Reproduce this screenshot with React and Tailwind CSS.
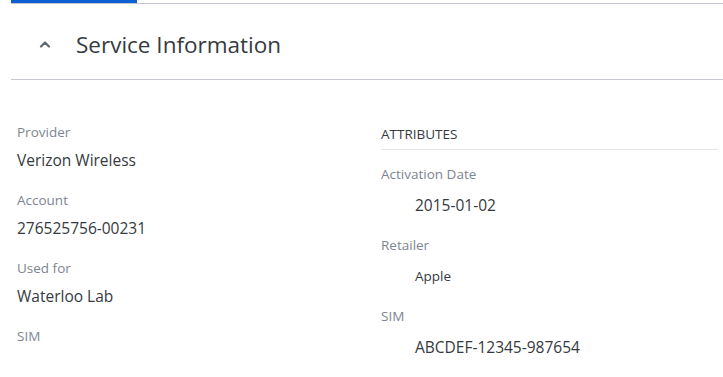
const leftFields = [
  { label: 'Provider', value: 'Verizon Wireless' },
  { label: 'Account', value: '276525756-00231' },
  { label: 'Used for', value: 'Waterloo Lab' },
  { label: 'SIM', value: '' },
]

const attributes = [
  { label: 'Activation Date', value: '2015-01-02', size: 'text-[15.5px]' },
  { label: 'Retailer', value: 'Apple', size: 'text-[13.5px]' },
  { label: 'SIM', value: 'ABCDEF-12345-987654', size: 'text-[15.5px]' },
]

function ChevronUp() {
  return (
    <svg width="12" height="8" viewBox="0 0 12 8" className="text-[#5f6773]">
      <path d="M2 6.5 L6 2.5 L10 6.5" fill="none" stroke="currentColor" strokeWidth="2.2" strokeLinecap="round" strokeLinejoin="round" />
    </svg>
  )
}

export default function App() {
  return (
    <div className="w-[723px] h-[377px] bg-white pl-[11px] overflow-hidden" style={{ fontFamily: '"Open Sans", sans-serif' }}>
      <div className="h-[4px] border-b border-[#c5c8ce]">
        <div className="w-[126px] h-[3px] bg-[#0b5fd0]" />
      </div>

      <div className="h-[76px] border-b border-[#c5c8ce] flex items-center pt-[7px]">
        <div className="w-[65px] flex justify-center pl-[2px] pb-[2px]">
          <ChevronUp />
        </div>
        <h2 className="text-[22.5px] text-[#353a41] leading-none">Service Information</h2>
      </div>

      <div className="flex pt-[43px]">
        <div className="w-[370px] pl-[6px] flex flex-col">
          {leftFields.map(f => (
            <div key={f.label} className="h-[68px]">
              <p className="text-[13.5px] leading-[18px] text-[#7d8592]">{f.label}</p>
              <p className="text-[15.5px] leading-[20px] text-[#353a41] mt-[9px]">{f.value}</p>
            </div>
          ))}
        </div>

        <div className="flex-1 pr-[5px] pt-[2px]">
          <p className="text-[13.5px] font-medium text-[#353a41] leading-[18px] pb-[6px] border-b border-[#e3e6ea]">ATTRIBUTES</p>
          <div className="flex flex-col pt-[15px]">
            {attributes.map(a => (
              <div key={a.label} className="h-[71px]">
                <p className="text-[13.5px] leading-[18px] text-[#7d8592]">{a.label}</p>
                <p className={`${a.size} leading-[20px] text-[#353a41] mt-[12px] pl-[34px]`}>{a.value}</p>
              </div>
            ))}
          </div>
        </div>
      </div>
    </div>
  )
}
